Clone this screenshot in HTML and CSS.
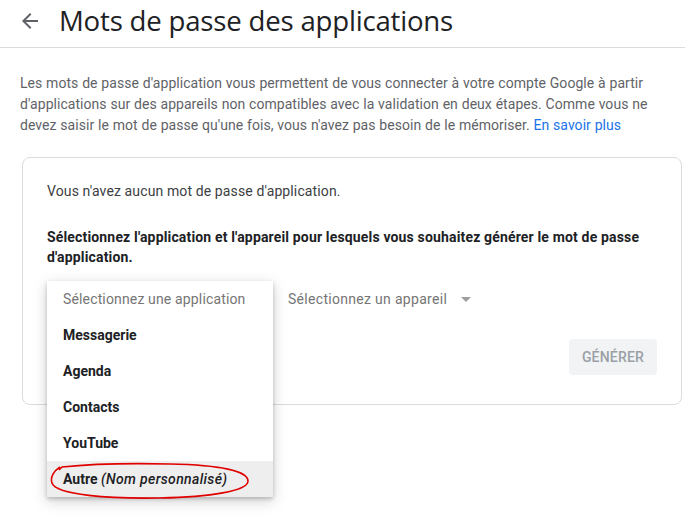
FILE: index.html
```html
<!DOCTYPE html>
<html lang="fr">
<head>
<meta charset="utf-8">
<link rel="stylesheet" href="styles.css">
</head>
<body>
<header class="top">
  <svg class="back" width="24" height="24" viewBox="0 0 24 24"><path d="M20 11H7.83l5.59-5.59L12 4l-8 8 8 8 1.41-1.41L7.83 13H20v-2z" fill="#5f6368"/></svg>
  <h1 class="title">Mots de passe des applications</h1>
</header>
<main class="content">
  <p class="intro">Les mots de passe d'application vous permettent de vous connecter à votre compte Google à partir d'applications sur des appareils non compatibles avec la validation en deux étapes. Comme vous ne devez saisir le mot de passe qu'une fois, vous n'avez pas besoin de le mémoriser. <a class="link" href="#">En savoir plus</a></p>
  <section class="card">
    <p class="none">Vous n'avez aucun mot de passe d'application.</p>
    <p class="select-label">Sélectionnez l'application et l'appareil pour lesquels vous souhaitez générer le mot de passe d'application.</p>
    <div class="selects">
      <div class="app-select">
        <ul class="menu">
          <li class="menu-item placeholder">Sélectionnez une application</li>
          <li class="menu-item">Messagerie</li>
          <li class="menu-item">Agenda</li>
          <li class="menu-item">Contacts</li>
          <li class="menu-item">YouTube</li>
          <li class="menu-item active">Autre&nbsp;<em>(Nom personnalisé)</em><svg class="circle" width="202" height="40" viewBox="0 0 202 40"><path d="M10 6 C 4 10, 0 16, 2 22 C 6 34, 60 38, 110 37 C 160 36, 198 30, 198 20 C 198 10, 170 4, 120 3 C 80 2, 40 3, 12 6 L 9 9" fill="none" stroke="#e00000" stroke-width="1.6"/></svg></li>
        </ul>
      </div>
      <div class="device-select">Sélectionnez un appareil <span class="caret"></span></div>
    </div>
    <div class="actions">
      <button class="gen" type="button">GÉNÉRER</button>
    </div>
  </section>
</main>
</body>
</html>
```
FILE: styles.css
```css
* { box-sizing: border-box; }
html, body { min-height: 516px; }
body {
  margin: 0;
  min-height: 100vh;
  font-family: Roboto, "Liberation Sans", Arial, sans-serif;
  background: #fff;
  color: #202124;
}
.top {
  height: 48px;
  display: flex;
  align-items: center;
  border-bottom: 1px solid #dadce0;
  padding-left: 18px;
}
.back { margin-top: -6px; }
.title {
  margin: -8px 0 0 17px;
  font-family: "Open Sans", Roboto, sans-serif;
  font-weight: 400;
  font-size: 27.6px;
  color: #202124;
  letter-spacing: -0.2px;
}
.content { padding: 25px 12px 0 20px; }
.intro {
  margin: 0;
  font-size: 14px;
  line-height: 21px;
  letter-spacing: 0.04px;
  word-spacing: 0.3px;
  color: #5f6368;
}
.link { color: #1a73e8; text-decoration: none; }
.card {
  margin: 21px -9px 0 2px;
  border: 1px solid #dadce0;
  border-radius: 8px;
  padding: 23px 24px 29px 24px;
  height: 248px;
}
.none {
  margin: 0;
  font-size: 14px;
  line-height: 20px;
  letter-spacing: 0.12px;
  color: #3c4043;
}
.select-label {
  margin: 26px 0 0;
  font-size: 14px;
  line-height: 20px;
  font-weight: 700;
  letter-spacing: 0.16px;
  color: #202124;
}
.selects {
  display: flex;
  align-items: flex-start;
  margin-top: 14px;
  height: 36px;
}
.app-select {
  position: relative;
  width: 241px;
  height: 36px;
}
.menu {
  position: absolute;
  top: 0;
  left: 0;
  width: 226px;
  margin: 0;
  padding: 0;
  list-style: none;
  background: #fff;
  box-shadow: 0 2px 4px rgba(0,0,0,0.2), 0 4px 14px rgba(0,0,0,0.18);
  z-index: 2;
}
.menu-item {
  position: relative;
  height: 36px;
  display: flex;
  align-items: center;
  padding-left: 16px;
  font-size: 14px;
  font-weight: 700;
  color: #202124;
  white-space: nowrap;
}
.menu-item em { font-style: italic; font-weight: 500; letter-spacing: 0.35px; }
.menu-item.placeholder { font-weight: 400; color: #757575; padding-bottom: 1px; letter-spacing: 0.15px; }
.menu-item.active { background: #eeeeee; }
.circle {
  position: absolute;
  left: 3px;
  top: 0;
}
.device-select {
  display: flex;
  align-items: center;
  height: 36px;
  font-size: 14px;
  letter-spacing: 0.3px;
  color: #757575;
}
.caret {
  margin-left: 14px;
  width: 0;
  height: 0;
  border-left: 5.5px solid transparent;
  border-right: 5.5px solid transparent;
  border-top: 5px solid #9e9e9e;
}
.actions {
  display: flex;
  justify-content: flex-end;
  margin-top: 22px;
}
.gen {
  width: 88px;
  height: 36px;
  border: 0;
  border-radius: 4px;
  background: #f1f3f4;
  color: #9aa0a6;
  font-family: Roboto, sans-serif;
  font-weight: 500;
  font-size: 14px;
  letter-spacing: 0.2px;
}
```
